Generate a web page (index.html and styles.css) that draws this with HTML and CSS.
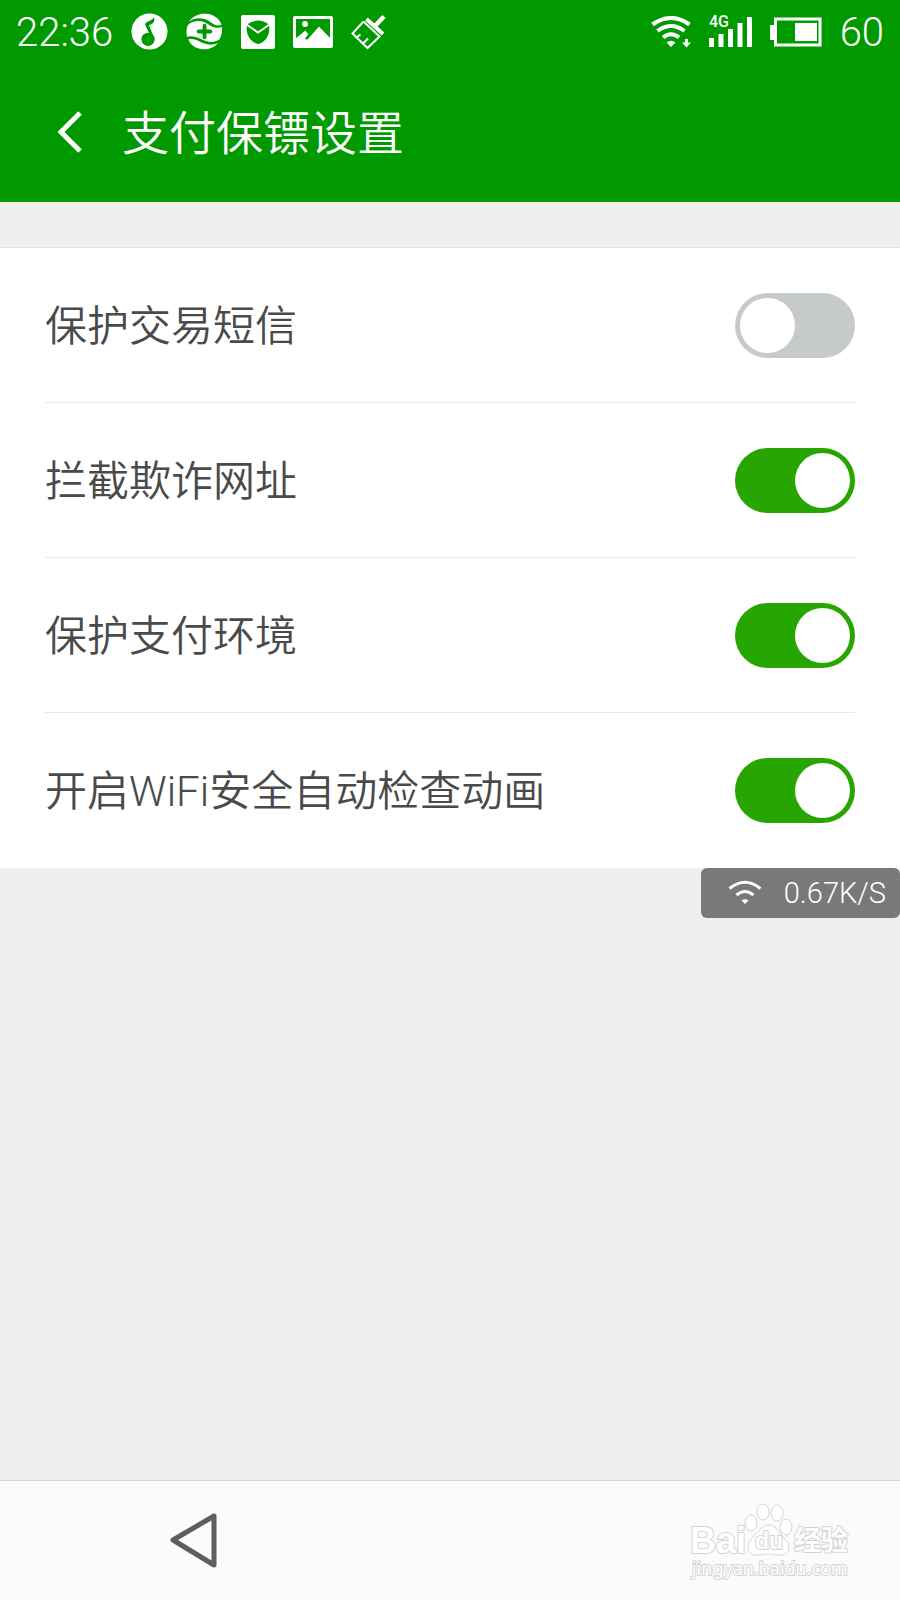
FILE: index.html
```html
<!DOCTYPE html>
<html lang="zh-CN">
    <head>
        <meta charset="utf-8">
        <meta name="viewport" content="width=device-width, initial-scale=1">
        <title>支付保镖设置</title>
        <link rel="stylesheet" href="styles.css">
    </head>

    <body>
        <header class="header">
            <div class="status">
                <span class="status-text">22:36</span>
                <!-- music -->
                <svg width="37" height="37" viewBox="0 0 38 38">
                    <circle cx="19" cy="19" r="18.5" fill="#fff"/>
                    <circle cx="17.5" cy="27" r="6.8" fill="#009900"/>
                    <path d="M21.5 27L14.500 12C15 8 21 8.500 23.500 4.500C25.500 9 21.500 11.500 18.500 12.500L24.300 27Z" fill="#009900"/>
                </svg>
                <!-- health -->
                <svg width="37" height="37" viewBox="0 0 38 38">
                    <path d="M3 9C8 2 15 .5 20 .8C29 1 35 7 36.500 12C30 15 26 9 20 6.500C14 4.500 8 5 3 9Z" fill="#fff"/>
                    <path d="M1.500 13C5 8.500 13 7 19 9.500C25 12.500 29 17 37 14.500C37.500 20 36 24 34.500 27C29 31 22 30 17 27.500C11 24.500 6 23 1 24.500C0 20 .5 16 1.500 13Z" fill="#fff"/>
                    <path d="M2.500 27C9 25.500 13 29 18 31C23 33 28 33 33 31C28 36 22 37.500 18 37.300C10 37 4 32.500 2.500 27Z" fill="#fff"/>
                    <path d="M19 13V25M13 19H25" stroke="#009900" stroke-width="4" stroke-linecap="round" fill="none"/>
                </svg>
                <!-- shield -->
                <svg width="34" height="34" viewBox="0 0 34 34">
                    <rect width="34" height="34" rx="2" fill="#fff"/>
                    <path d="M6 9.500Q17 1.500 28 9.500Q29.500 19 24 25Q20 29 17 29Q14 29 10 25Q4.500 19 6 9.500Z" fill="#009900"/>
                    <path d="M5.500 9.500L17 17.500L28.500 9.500" stroke="#fff" stroke-width="2" fill="none"/>
                </svg>
                <!-- picture -->
                <svg width="40" height="32" viewBox="0 0 40 32">
                    <rect width="40" height="32" rx="2" fill="#fff"/>
                    <path d="M3 3H37V22L26 10.500L14.500 23.500L11.500 23L15 18L12.500 14.500L3 22Z" fill="#009900"/>
                    <circle cx="12" cy="8" r="3" fill="#fff"/>
                    <path d="M9 24L14 18" stroke="#fff" stroke-width="2.500"/>
                </svg>
                <!-- broom -->
                <svg width="36" height="36" viewBox="0 0 36 36" fill="none" stroke="#fff">
                    <path d="M24 12L33 2.500" stroke-width="4.500"/>
                    <path d="M15.500 5L32 20" stroke-width="4"/>
                    <path d="M12.500 7.500L1.500 19.500L16.500 34L28.500 22.500L12.500 7.500" stroke-width="2"/>
                    <path d="M6 23L9.500 20.500M12.500 29L17 24.500" stroke-width="2"/>
                </svg>

                <!-- wifi -->
                <svg class="status-right" width="40" height="32" viewBox="0 0 40 32" fill="none" stroke="#fff">
                    <path d="M1.500 8.500Q20 -4.500 38.500 8.500" stroke-width="4"/>
                    <path d="M6.500 15Q20 5 33.500 15" stroke-width="4"/>
                    <path d="M12 21.500Q20 15 28 21.500" stroke-width="4"/>
                    <path d="M15.500 26.500Q20 23 24.500 26.500L20 31Z" fill="#fff" stroke="none"/>
                    <path d="M35.500 23V27" stroke-width="3"/>
                    <path d="M31 26.500H40L35.500 31.500Z" fill="#fff" stroke="none"/>
                </svg>
                <!-- signal -->
                <svg width="43" height="46" viewBox="0 -6 43 46" fill="#fff">
                    <text class="net-type" x="0" y="12">4G</text>
                    <path d="M0 23H5V32H0ZM9.500 19H14.500V32H9.500ZM19 14H24V32H19ZM28.500 8H33.500V32H28.500ZM38 2H43V32H38Z"/>
                </svg>
                <!-- battery -->
                <svg width="52" height="32" viewBox="0 0 52 32">
                    <path d="M5.500 3H50V29H5.500Z" fill="none" stroke="#fff" stroke-width="3"/>
                    <path d="M0 9H4V24H0ZM25 7H47V25H25Z" fill="#fff"/>
                </svg>
                <span class="status-text">60</span>
            </div>
            <div class="titlebar">
                <button class="back" type="button" aria-label="返回">
                    <svg width="24" height="42" viewBox="0 0 24 42">
                        <path d="M22 2L3 21L22 40" fill="none" stroke="#fff" stroke-width="5"/>
                    </svg>
                </button>
                <h1 class="title">支付保镖设置</h1>
            </div>
        </header>

        <main class="content">
            <div class="list">
                <div class="row">
                    <label for="sms">保护交易短信</label>
                    <input class="switch" id="sms" type="checkbox">
                </div>
                <div class="row">
                    <label for="url">拦截欺诈网址</label>
                    <input class="switch" id="url" type="checkbox" checked>
                </div>
                <div class="row">
                    <label for="env">保护支付环境</label>
                    <input class="switch" id="env" type="checkbox" checked>
                </div>
                <div class="row">
                    <label for="wifi">开启WiFi安全自动检查动画</label>
                    <input class="switch" id="wifi" type="checkbox" checked>
                </div>
            </div>
            <div class="speed">
                <svg width="34" height="26" viewBox="0 0 34 26" fill="none" stroke="#fff">
                    <path d="M1.500 8.500Q17 -4 32.500 8.500" stroke-width="3"/>
                    <path d="M8.500 15Q17 8 25.500 15" stroke-width="3"/>
                    <path d="M13.500 20.500Q17 18 20.500 20.500L17 24Z" fill="#fff" stroke="none"/>
                </svg>
                <span>0.67K/S</span>
            </div>
        </main>

        <nav class="navbar">
            <button class="nav-back" type="button" aria-label="后退">
                <svg width="48" height="58" viewBox="0 0 48 58">
                    <path d="M45 4V53L4 28Z" fill="none" stroke="#5e5e5e" stroke-width="5" stroke-linejoin="round"/>
                </svg>
            </button>
            <svg class="mark" width="166" height="84" viewBox="0 0 166 84">
                <text class="mark-name" x="0" y="54">Bai</text>
                <ellipse cx="61" cy="24" rx="6" ry="8"/>
                <ellipse cx="73" cy="13" rx="6" ry="8"/>
                <ellipse cx="87" cy="14" rx="6" ry="8"/>
                <ellipse cx="96" cy="28" rx="6" ry="8"/>
                <path d="M79 26C87 26 88 34 94 39C102 46 100 56 90 56C84 56 82 55 79 55C75 55 73 56 67 56C57 56 55 47 62 39C68 34 71 26 79 26Z"/>
                <text class="mark-du" x="65" y="50">du</text>
                <text class="mark-cn" x="104" y="51">经验</text>
                <text class="mark-url" x="2" y="76">jingyan.baidu.com</text>
            </svg>
        </nav>
    </body>
</html>
```
FILE: styles.css
```css
* {
    box-sizing: border-box;
}

body {
    display: flex;
    flex-direction: column;
    min-height: 100vh;
    margin: 0;
    background: #efefef;
    color: #4a4a4a;
    font-family: Roboto, "Noto Sans CJK SC", sans-serif;
    font-weight: 300;
}

button {
    display: flex;
    padding: 0;
    border: 0;
    background: none;
    cursor: pointer;
}

svg {
    flex: none;
}

/* Header */

.header {
    background: #009900;
    color: #fff;
}

.status {
    display: flex;
    align-items: center;
    gap: 18px;
    height: 62px;
    padding: 1px 16px 0;
}

.status-text {
    padding-top: 3px;
    font-size: 40px;
    line-height: 58px;
}

.status-right {
    margin-left: auto;
}

.net-type {
    font-size: 16px;
    font-weight: 500;
}

.titlebar {
    display: flex;
    align-items: center;
    gap: 40px;
    height: 140px;
    padding: 0 58px;
}

.title {
    margin: 0;
    padding-top: 4px;
    font-size: 47px;
    font-weight: 350;
    line-height: 60px;
}

/* Settings */

.content {
    display: flex;
    flex-direction: column;
    flex: 1;
    padding-top: 45px;
}

.list {
    padding: 0 45px;
    border-top: 1px solid #e0e0e0;
    background: #fff;
}

.row {
    display: flex;
    align-items: center;
    justify-content: space-between;
    height: 155px;
    border-bottom: 1px solid #e8e8e8;
    font-size: 42px;
    font-weight: 350;
    line-height: 60px;
}

.row:last-child {
    border-bottom-color: #fff;
}

.row label {
    padding-top: 4px;
}

.switch {
    flex: none;
    width: 120px;
    height: 65px;
    margin: 0;
    padding: 5px;
    border-radius: 33px;
    background: #c7cacb;
    appearance: none;
    cursor: pointer;
}

.switch::before {
    content: "";
    display: block;
    width: 55px;
    height: 55px;
    border-radius: 50%;
    background: #fff;
}

.switch:checked {
    background: #27a500;
}

.switch:checked::before {
    margin-left: auto;
}

.speed {
    display: flex;
    align-items: center;
    align-self: flex-end;
    gap: 22px;
    height: 50px;
    padding: 0 14px 0 27px;
    border-radius: 6px;
    background: #797979;
    color: #fff;
    font-size: 29px;
}

/* Bottom bar */

.navbar {
    display: flex;
    align-items: center;
    justify-content: space-between;
    height: 120px;
    padding: 0 44px 0 169px;
    border-top: 1px solid #d8d8d8;
    background: #fbfbfb;
}

.mark {
    fill: #fff;
    stroke: #d4d4d4;
    stroke-width: 1px;
}

.mark text {
    paint-order: stroke;
    stroke-width: 2px;
}

.mark-name {
    font: bold 36px "Liberation Sans", sans-serif;
}

.mark-du {
    font: bold 23px "Liberation Sans", sans-serif;
}

.mark-cn {
    font: bold 27px "Noto Sans CJK SC", sans-serif;
}

.mark-url {
    font: 18px "Noto Sans", sans-serif;
}
```
